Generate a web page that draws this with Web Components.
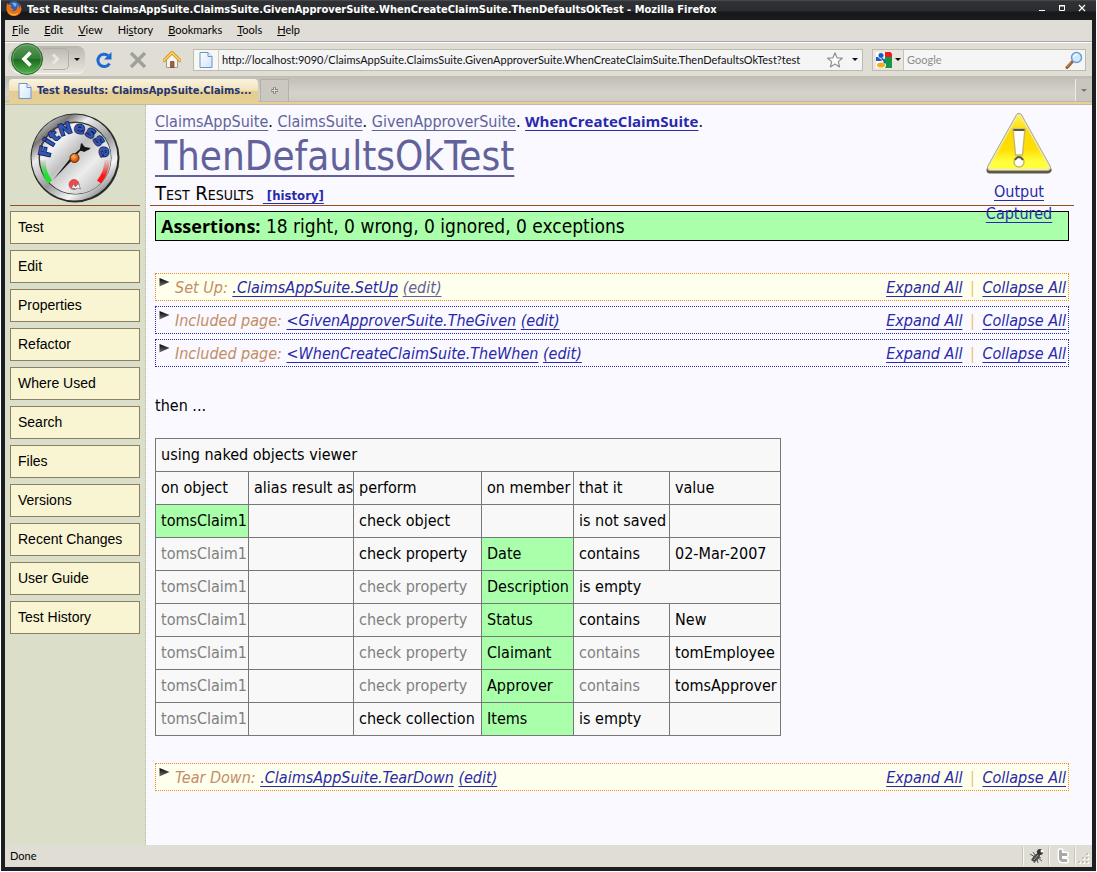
<!DOCTYPE html>
<html lang="en">
<head>
<meta charset="utf-8">
<title>Test Results: ClaimsAppSuite</title>
<style>
  html, body { margin: 0; background: #fff; }
  body { font: 16px/22px "DejaVu Sans Condensed", "DejaVu Sans", sans-serif; color: #000; }
</style>
</head>
<body>
<browser-window>
  <title-bar slot="title">Test Results: ClaimsAppSuite.ClaimsSuite.GivenApproverSuite.WhenCreateClaimSuite.ThenDefaultsOkTest - Mozilla Firefox</title-bar>
  <menu-bar slot="chrome"></menu-bar>
  <nav-bar slot="chrome"></nav-bar>
  <tab-strip slot="chrome">Test Results: ClaimsAppSuite.Claims...</tab-strip>
  <side-nav></side-nav>
  <wiki-page>
    <page-header></page-header>
    <assertion-summary><b slot="label">Assertions:</b> 18 right, 0 wrong, 0 ignored, 0 exceptions</assertion-summary>
    <div class="group">
      <collapsible-section kind="fixture" edited label="Set Up:" target=".ClaimsAppSuite.SetUp"></collapsible-section>
      <collapsible-section label="Included page:" target="&lt;GivenApproverSuite.TheGiven"></collapsible-section>
      <collapsible-section label="Included page:" target="&lt;WhenCreateClaimSuite.TheWhen"></collapsible-section>
    </div>
    <p>then ...</p>
    <result-table></result-table>
    <div class="group">
      <collapsible-section kind="fixture" label="Tear Down:" target=".ClaimsAppSuite.TearDown"></collapsible-section>
    </div>
  </wiki-page>
  <status-bar slot="status">Done</status-bar>
</browser-window>

<script>
const uiFont = '11px/14px Lato, Roboto, "Noto Sans", sans-serif';
const uiBold = 'bold 11px/14px "DejaVu Sans Condensed", "DejaVu Sans", sans-serif';

const base = `<style>
  :host, *, *::before, *::after { box-sizing: border-box; }
  button { font: inherit; color: inherit; border: 0; padding: 0; margin: 0; background: none; display: flex; align-items: center; justify-content: center; }
  a { color: #2929ab; text-decoration: underline; text-underline-offset: 3px; text-decoration-thickness: 1px; text-decoration-skip-ink: none; }
  a.visited { color: #62629a; }
  svg { display: block; flex: none; }
</style>`;

function define(name, view) {
  customElements.define(name, class extends HTMLElement {
    connectedCallback() {
      if (this.shadowRoot) return;
      const t = document.createElement('template');
      t.innerHTML = base + (typeof view === 'function' ? view(this) : view);
      this.attachShadow({ mode: 'open' }).append(t.content.cloneNode(true));
    }
  });
}

const pageIcon = `<svg width="14" height="16" viewBox="0 0 14 16" aria-hidden="true">
  <defs><linearGradient id="pg" x2="1" y2="1"><stop offset="0" stop-color="#fff"/><stop offset="1" stop-color="#cfe4fb"/></linearGradient></defs>
  <path d="M1 .5h8l4 4v11H1z" fill="url(#pg)" stroke="#6a93cf"/><path d="M9 .5v4h4" fill="#e8f2ff" stroke="#6a93cf"/></svg>`;
const caret = `<svg width="6" height="3" viewBox="0 0 6 3" aria-hidden="true"><path d="M0 0h6L3 3z" fill="#111"/></svg>`;

define('browser-window', `<style>
  :host { display: flex; flex-direction: column; min-height: calc(100vh - 1px); margin: 0 1px 1px; background: #1b1f22; }
  .inner { flex: 1; display: flex; flex-direction: column; margin: 0 4px 4px; background: #e0ddd4; }
  .content { flex: 1; display: grid; grid-template-columns: 141px minmax(0, 1fr); background: #f9f9ff; }
</style>
<slot name="title"></slot>
<div class="inner"><slot name="chrome"></slot><div class="content"><slot></slot></div><slot name="status"></slot></div>`);

define('title-bar', `<style>
  :host { display: flex; align-items: center; height: 20px; padding: 0 7px 0 5px; gap: 5px; font: ${uiBold}; color: #fff;
    background: linear-gradient(#45484b 0 1px, #303235 1px, #2a2c2f 11px, #17181a 12px, #1a1b1d); }
  .text { flex: 1; white-space: nowrap; overflow: hidden; padding-bottom: 1px; }
  .buttons { display: flex; gap: 6px; padding-bottom: 4px; }
  button { width: 14px; height: 12px; }
</style>
<svg width="16" height="18" viewBox="0 0 16 18" aria-hidden="true"><circle cx="8" cy="7" r="7" fill="#2c5fae"/><path d="M6 2q3-1 5 1L9 6z" fill="#7fb2e6"/>
<path d="M1 3Q0 6 .5 9 2 15 8 15q7-.5 7.500-7Q15 5 14 3.500q.3 3-.7 4-.3-3-2-4Q12 7 10 9q-2 2-4 .5L8 8Q6 8 4.500 6.500 5 5 6 5 4 3 3 4 1.500 3 1.500 2z" fill="#e9701a"/><path d="M1.500 8q1 5 6.500 5 4 0 5.500-3.500Q12 14.500 8 14.500 2.500 14 1.500 8z" fill="#f9b53a"/></svg>
<span class="text"><slot></slot></span>
<span class="buttons">
  <button aria-label="Minimize"><svg width="8" height="8" viewBox="0 0 8 8"><path d="M1 6h6v1H1z" fill="#fff"/></svg></button>
  <button aria-label="Maximize"><svg width="8" height="8" viewBox="0 0 8 8"><path d="M1.500 2h5v4.500h-5zM1 1.500h6" fill="none" stroke="#fff"/></svg></button>
  <button aria-label="Close"><svg width="8" height="8" viewBox="0 0 8 8"><path d="M1 1l6 6M7 1L1 7" stroke="#fff" stroke-width="1.200"/></svg></button>
</span>`);

define('menu-bar', `<style>
  :host { display: flex; gap: 15px; height: 23px; padding: 2px 7px 0; font: ${uiFont}; color: #000; background: #e0ddd6; border-bottom: 1px solid #fff; box-shadow: inset 0 -1px #a7a6aa; }
  button { height: 15px; display: block; }
</style>
<button><u>F</u>ile</button><button><u>E</u>dit</button><button><u>V</u>iew</button><button>Hi<u>s</u>tory</button><button><u>B</u>ookmarks</button><button><u>T</u>ools</button><button><u>H</u>elp</button>`);

define('nav-bar', `<style>
  :host { display: flex; align-items: center; height: 33px; padding: 0 6px 0 3px; font: ${uiFont}; background: #e0ddd4; }
  .history { display: flex; align-items: center; width: 77px; height: 28px; border-radius: 14px 8px 8px 14px; background: linear-gradient(#b9b6ae, #d6d3cb 60%, #e6e3dc); border-bottom: 1px solid #f8f7f2; }
  .back { width: 32px; height: 34px; margin-left: 3px; }
  .forward { width: 26px; height: 22px; border: 1px solid #b0ada6; border-left: 0; border-radius: 0 5px 5px 0; }
  .more { width: 16px; height: 22px; }
  .tools { display: flex; gap: 16px; margin-left: 10px; align-items: center; }
  .tools button { width: 18px; height: 22px; }
  .field { display: flex; align-items: stretch; height: 22px; border: 1px solid #bdbaae; background: #f5f5f5; }
  .url { flex: 1; margin: 0 9px 0 12px; }
  .site { width: 25px; background: #f7f7f4; border-right: 1px solid #cfccc2; }
  .field input { flex: 1; min-width: 0; width: 0; border: 0; outline: 0; background: none; font: inherit; color: #111; padding: 0 3px; }
  .star { width: 20px; } .drop { width: 20px; }
  .url .star { margin-right: 3px; } .url .drop { width: 14px; }
  .search { width: 214px; }
  .engine { width: 31px; gap: 3px; border-right: 1px solid #c5c2b8; background: #e8e6df; }
  .go { width: 22px; }
  input::placeholder { color: #8c8c8c; opacity: 1; }
</style>
<div class="history">
  <button class="back" aria-label="Back"><svg width="32" height="32" viewBox="0 0 32 32"><defs><linearGradient id="g" y2="1" x2="0"><stop offset="0" stop-color="#5d9a5c"/><stop offset=".48" stop-color="#357f36"/><stop offset=".52" stop-color="#1d6b20"/><stop offset="1" stop-color="#52b84e"/></linearGradient></defs><circle cx="16" cy="16" r="15.500" fill="url(#g)" stroke="#2c6430"/><circle cx="16" cy="16" r="14.300" fill="none" stroke="#8fc08c" stroke-width=".8" opacity=".7"/><path d="M19.500 9.500L13 16l6.500 6.500" fill="none" stroke="#fff" stroke-width="3.600"/></svg></button>
  <button class="forward" aria-label="Forward"><svg width="10" height="12" viewBox="0 0 10 12"><path d="M2 1.500L6.500 6 2 10.500" fill="none" stroke="#e9e7e2" stroke-width="2.800"/></svg></button>
  <button class="more" aria-label="Recent pages">${caret}</button>
</div>
<div class="tools">
  <button aria-label="Reload"><svg width="18" height="18" viewBox="0 0 18 18"><path d="M14.500 12.500A6.200 6.200 0 1 1 13 4.500" fill="none" stroke="#1f68d2" stroke-width="3"/><path d="M16.500 1v7.500H9z" fill="#1f68d2"/></svg></button>
  <button aria-label="Stop"><svg width="18" height="18" viewBox="0 0 18 18"><path d="M2 2l14 14M16 2L2 16" stroke="#a19f9a" stroke-width="3.400"/></svg></button>
  <button aria-label="Home"><svg width="18" height="18" viewBox="0 0 18 18"><path d="M3.500 8v8.500h11V8L9 3z" fill="#f4f4f8" stroke="#9a9aa8"/><path d="M1 9.500L9 1.500l8 8" fill="none" stroke="#c98a1c" stroke-width="3.200" stroke-linecap="round"/><path d="M1 9.500L9 1.500l8 8" fill="none" stroke="#f9cd55" stroke-width="1.800" stroke-linecap="round"/><path d="M7.500 10.500h3.500v6H7.500z" fill="#a8642c" stroke="#70401c" stroke-width=".7"/></svg></button>
</div>
<div class="field url">
  <button class="site" aria-label="Site identity">${pageIcon}</button>
  <input aria-label="Address" value="http://localhost:9090/ClaimsAppSuite.ClaimsSuite.GivenApproverSuite.WhenCreateClaimSuite.ThenDefaultsOkTest?test">
  <button class="star" aria-label="Bookmark this page"><svg width="16" height="16" viewBox="0 0 16 16"><path d="M8 .9l2.100 4.900 5.200.4-4 3.400 1.300 5.300L8 12l-4.600 2.900 1.300-5.300-4-3.400 5.200-.4z" fill="#fdfdfd" stroke="#8f8f8f" stroke-width="1.200" stroke-linejoin="round"/></svg></button>
  <button class="drop" aria-label="Show history">${caret}</button>
</div>
<div class="field search">
  <button class="engine" aria-label="Search engine"><svg width="16" height="16" viewBox="0 0 16 16"><rect width="16" height="16" fill="#fff"/><path d="M9 0h5.500L16 1.500V5H9z" fill="#ee1c1c"/><path d="M9 5h7v11H9q2-3 0-5l-1-2z" fill="#149845"/><path d="M0 5h3l3 4H0z" fill="#1b5cc0"/><circle cx="5" cy="3.500" r="3" fill="#1b5cc0" stroke="#fff" stroke-width=".8"/><path d="M5.500 6.500Q10 9 8 11" fill="none" stroke="#1b5cc0" stroke-width="2"/><ellipse cx="5" cy="13" rx="4" ry="2.600" fill="#f4ae1a"/></svg>${caret}</button>
  <input aria-label="Search" placeholder="Google">
  <button class="go" aria-label="Search now"><svg width="18" height="18" viewBox="0 0 18 18"><path d="M2 16.500l5-5.500" stroke="#9c5a28" stroke-width="3" stroke-linecap="round"/><path d="M1.800 16l4.500-5" stroke="#e09a55" stroke-width="1"/><circle cx="11.500" cy="6.500" r="5" fill="#cfeaff" stroke="#6c9cd4" stroke-width="1.500"/><path d="M8.500 6q1-3 4-2.500" stroke="#fff" stroke-width="1.300" fill="none"/></svg></button>
</div>`);

define('tab-strip', `<style>
  :host { display: flex; height: 29px; padding: 3px 0 0 4px; gap: 2px; font: ${uiBold}; color: #22356e;
    background: linear-gradient(#bfbcb4, #d6d3cb 60%, #cfccc4 25px, #bab7ae 25px 26px, #e7cf96 26px 28px, #bdbab2 28px); }
  .tab { display: flex; align-items: center; justify-content: flex-start; gap: 5px; width: 249px; height: 25px; padding: 0 0 2px 9px; border-radius: 4px 4px 0 0; white-space: nowrap;
    background: linear-gradient(#fbf3df, #f1e3bd 45%, #e5cd91 50%, #e7d096); }
  .new { width: 29px; height: 22px; border: 1px solid #b3b0a8; border-bottom: 0; background: #cbc8c0; }
  .all { width: 17px; height: 22px; margin-left: auto; border-left: 1px solid #eeece6; background: #c9c6be; }
</style>
<button class="tab">${pageIcon}<slot></slot></button>
<button class="new" aria-label="New tab"><svg width="9" height="9" viewBox="0 0 9 9"><path d="M4.500 1v7M1 4.500h7" stroke="#77756f" stroke-width="2.400"/><path d="M4.500 1.500v6M1.500 4.500h6" stroke="#e2e0da"/></svg></button>
<button class="all" aria-label="List all tabs"><svg width="6" height="3" viewBox="0 0 6 3"><path d="M0 0h6L3 3z" fill="#77756f"/></svg></button>`);

define('fitnesse-logo', `<style>:host { display: block; } text { font: bold 16px "DejaVu Sans", sans-serif; }</style>
<svg width="90" height="92" viewBox="0 0 90 92" role="img" aria-label="FitNesse">
  <defs>
    <linearGradient id="rim" x1=".1" y1="0" x2=".9" y2="1"><stop offset="0" stop-color="#fff"/><stop offset=".18" stop-color="#777"/><stop offset=".3" stop-color="#eee"/><stop offset=".55" stop-color="#999"/><stop offset=".75" stop-color="#f6f6f6"/><stop offset="1" stop-color="#555"/></linearGradient>
    <linearGradient id="face" x1="0" y1="0" x2="1" y2="1"><stop offset="0" stop-color="#8c8c8c"/><stop offset=".25" stop-color="#f5f5f5"/><stop offset=".45" stop-color="#c0c0c0"/><stop offset=".65" stop-color="#ededed"/><stop offset="1" stop-color="#a5a5a5"/></linearGradient>
    <linearGradient id="gr" x2="0" y2="1"><stop offset="0" stop-color="#3f9a45" stop-opacity=".1"/><stop offset=".7" stop-color="#19e62a"/></linearGradient>
    <linearGradient id="rd" x2="0" y2="1"><stop offset="0" stop-color="#e05050" stop-opacity=".1"/><stop offset=".7" stop-color="#ff1418"/></linearGradient>
    <radialGradient id="hub" cx=".4" cy=".35"><stop offset="0" stop-color="#ffb45c"/><stop offset="1" stop-color="#d8540a"/></radialGradient>
    <path id="arc" d="M20 46A25 25 0 0 1 70 46L70 52" fill="none"/>
  </defs>
  <circle cx="45" cy="46" r="44.500" fill="#2b2b2b"/><circle cx="44.500" cy="45.500" r="43" fill="url(#rim)"/>
  <circle cx="45" cy="46" r="36.500" fill="#3b3b3b"/><circle cx="45.500" cy="46.500" r="35.500" fill="url(#face)"/>
  <path d="M13 48Q13 60 20 70" fill="none" stroke="url(#gr)" stroke-width="5"/>
  <path d="M77 48Q77 60 69 70" fill="none" stroke="url(#rd)" stroke-width="5"/>
  <text fill="#3455b4" stroke="#101c50" stroke-width="1.500" paint-order="stroke"><textPath href="#arc">FitNesse</textPath></text>
  <path d="M23 68L43 43l7-6 1-6 4 4 6 1-4 2-7 1-6 7z" fill="#171717"/><path d="M50 38l2-7 2 5 6 1-6 3z" fill="#171717"/>
  <circle cx="44.500" cy="46" r="4.500" fill="url(#hub)" stroke="#5a2706"/>
  <circle cx="44" cy="72.500" r="5" fill="#ef4a4a" stroke="#b83030" stroke-width=".6"/><path d="M41 77l2.500-5 2 3 3-3.500 2 5.500-3-1-2 1-2-1z" fill="#fff" stroke="#777" stroke-width=".8"/>
</svg>`);

define('side-nav', () => `<style>
  :host { display: block; padding: 7px 5px; background: #dbdfc9; border-right: 1px dotted #b9bba6; }
  .logo { display: flex; justify-content: center; padding-bottom: 1px; border-bottom: 1px solid #96501c; margin-bottom: 5px; }
  nav { display: flex; flex-direction: column; gap: 6px; }
  a { display: block; height: 33px; padding: 0 7px; border: 1px solid #8a8064; background: #f9f5d3; color: #000; text-decoration: none; font: 14px/31px "Liberation Sans", Arial, sans-serif; }
</style>
<div class="logo"><fitnesse-logo></fitnesse-logo></div>
<nav>${['Test', 'Edit', 'Properties', 'Refactor', 'Where Used', 'Search', 'Files', 'Versions', 'Recent Changes', 'User Guide', 'Test History'].map(t => `<a href="#">${t}</a>`).join('')}</nav>`);

define('wiki-page', `<style>
  :host { display: block; padding: 5px 18px 0 4px; }
  ::slotted(:not(page-header)) { margin-left: 5px !important; margin-right: 5px !important; }
  ::slotted(.group) { display: grid; gap: 5px; }
  ::slotted(p) { margin: 28px 0 21px; }
  ::slotted(assertion-summary) { margin-top: 5px; margin-bottom: 32px; }
  ::slotted(result-table) { margin-bottom: 27px; }
</style><slot></slot>`);

define('page-header', `<style>
  :host { display: block; position: relative; padding: 0 5px; border-bottom: 1px solid #96501c; }
  .crumbs { height: 22px; line-height: 22px; } .crumbs b { font-family: "Open Sans", sans-serif; font-size: 15px; }
  h1 { margin: 0; font-size: 40px; line-height: 49px; font-weight: normal; }
  h1 a { text-decoration-thickness: 2px; text-underline-offset: 5px; }
  h2 { margin: 0; display: flex; align-items: baseline; gap: 9px; height: 24px; font-size: 20px; line-height: 24px; font-weight: normal; font-variant: small-caps; }
  h2 a { font: bold 13px/22px "DejaVu Sans Condensed", sans-serif; }
  .captured { position: absolute; top: 2px; right: 16px; width: 78px; text-align: center; line-height: 22px; }
  .captured svg { margin: 0 auto 7px; }
</style>
<div class="crumbs"><a class="visited" href="#">ClaimsAppSuite</a>. <a class="visited" href="#">ClaimsSuite</a>. <a class="visited" href="#">GivenApproverSuite</a>. <b><a href="#">WhenCreateClaimSuite</a></b>.</div>
<h1><a class="visited" href="#">ThenDefaultsOkTest</a></h1>
<h2>Test Results <a href="#">&nbsp;[history]</a></h2>
<a class="captured" href="#"><svg width="66" height="62" viewBox="0 0 66 62" aria-hidden="true">
  <defs><linearGradient id="y" x2="0" y2="1"><stop offset="0" stop-color="#fff04a"/><stop offset=".3" stop-color="#ffd900"/><stop offset=".65" stop-color="#ffdf05"/><stop offset=".9" stop-color="#ffff3c"/></linearGradient></defs>
  <path d="M33 5L62 57H4z" fill="#5d5a45" stroke="#5d5a45" stroke-width="7" stroke-linejoin="round" transform="translate(0 1)"/>
  <path d="M33 4.500L61.500 55.500H4.500z" fill="#b3af80" stroke="#b3af80" stroke-width="7" stroke-linejoin="round"/>
  <path d="M33 4.500L61.500 55.500H4.500z" fill="#efecc0" stroke="#efecc0" stroke-width="5" stroke-linejoin="round"/>
  <path d="M33 5L61 55H5z" fill="url(#y)" stroke="url(#y)" stroke-width="3" stroke-linejoin="round"/>
  <path d="M27 17h12l-2.500 26h-7z" fill="#fff" stroke="#c9b96a" stroke-width="1.500"/><path d="M27.500 18h11" stroke="#5c5648" stroke-width="2"/>
  <circle cx="33" cy="50" r="5" fill="#fff" stroke="#c9b96a" stroke-width="1.500"/><path d="M29 48q4-6 8 0" stroke="#5c5648" stroke-width="2" fill="none"/>
</svg>Output Captured</a>`);

define('assertion-summary', `<style>
  :host { display: block; height: 30px; padding: 0 5px; border: 1px solid #000; background: #aaffaa; font-size: 19px; line-height: 28px; white-space: nowrap; }
  ::slotted(b) { font-family: "Open Sans", sans-serif; font-size: 18px; }
</style><slot name="label"></slot><slot></slot>`);

define('collapsible-section', el => {
  const target = el.getAttribute('target').replace('<', '&lt;');
  return `<style>
  :host { display: flex; align-items: flex-start; height: 28px; padding: 2px 2px 0 3px; border: 1px dotted #2929ab; color: #c38d66; font-style: italic; line-height: 24px; white-space: nowrap; }
  :host([kind="fixture"]) { border-color: #f08a1c; background: #ffffee; }
  .toggle { width: 11px; height: 9px; margin: 2px 5px 0 0; }
  .all { margin-left: auto; } .all i { color: #efc07c; font-style: normal; padding: 0 3px; }
</style>
<button class="toggle" aria-label="Expand"><svg width="11" height="9" viewBox="0 0 11 9"><defs><linearGradient id="t" x2="0" y2="1"><stop offset="0" stop-color="#000"/><stop offset="1" stop-color="#777"/></linearGradient></defs><path d="M.5 0L10.500 4 .5 8.500z" fill="url(#t)"/></svg></button>
<span>${el.getAttribute('label')} <a href="#">${target}</a> <a href="#"${el.hasAttribute('edited') ? ' class="visited"' : ''}>(edit)</a></span>
<span class="all"><a href="#">Expand All</a> <i>|</i> <a href="#">Collapse All</a></span>`;
});

/* Cell marks: "+" passed, "-" repeated from the row above. */
const rows = [
  ['on object', 'alias result as', 'perform', 'on member', 'that it', 'value'],
  ['+tomsClaim1', '', 'check object', '', 'is not saved', ''],
  ['-tomsClaim1', '', 'check property', '+Date', 'contains', '02-Mar-2007'],
  ['-tomsClaim1', '', '-check property', '+Description', 'is empty'],
  ['-tomsClaim1', '', '-check property', '+Status', 'contains', 'New'],
  ['-tomsClaim1', '', '-check property', '+Claimant', '-contains', 'tomEmployee'],
  ['-tomsClaim1', '', '-check property', '+Approver', '-contains', 'tomsApprover'],
  ['-tomsClaim1', '', 'check collection', '+Items', 'is empty', '']
];
define('result-table', () => `<style>
  :host { display: block; }
  table { border-collapse: collapse; table-layout: fixed; width: 626px; background: #f8f8f8; }
  td { height: 33px; padding: 0 5px; border: 1px solid #777; white-space: nowrap; line-height: 22px; }
  .pass { background: #aaffaa; } .same { color: #808080; }
</style>
<table><colgroup><col style="width:93px"><col style="width:105px"><col style="width:128px"><col style="width:92px"><col style="width:96px"><col></colgroup>
<tbody><tr><td colspan="6">using naked objects viewer</td></tr>
${rows.map(r => `<tr>${r.map((c, i) => {
  const cls = c[0] === '+' ? ' class="pass"' : c[0] === '-' ? ' class="same"' : '';
  const span = r.length === 5 && i === 4 ? ' colspan="2"' : '';
  return `<td${cls}${span}>${c.replace(/^[+-]/, '')}</td>`;
}).join('')}</tr>`).join('')}
</tbody></table>`);

define('status-bar', `<style>
  :host { display: flex; align-items: center; height: 22px; padding-left: 5px; font: ${uiFont}; background: #e0ddd4; }
  .icons { display: flex; margin-left: auto; }
  .icons span { display: flex; align-items: center; justify-content: center; width: 26px; height: 18px; border-left: 1px solid #f8f7f2; box-shadow: -1px 0 #c6c3ba; }
  .icons span:last-child { width: 17px; align-items: flex-end; }
</style><slot></slot>
<div class="icons">
  <span><svg width="16" height="16" viewBox="0 0 16 16" aria-label="Firebug"><path d="M1 6l5 3M2 12l4-2M5 15l2-3M9 15l-1-4M4 4l3 4M8 3l1 3M12 10l-3-1M13 13l-4-3" stroke="#555"/><ellipse cx="7" cy="9.500" rx="2.700" ry="5" transform="rotate(42 7 9.500)" fill="#4a4a4a"/><path d="M5 12l4-5" stroke="#999"/><circle cx="11" cy="4" r="3" fill="#333"/><circle cx="13" cy="3" r="1.500" fill="#fff"/></svg></span>
  <span><svg width="16" height="16" viewBox="0 0 16 16" aria-label="Twitter"><path d="M5.500 3v7q0 2.500 2.500 2.500h3M5.500 6.500h5.500" fill="none" stroke="#fff" stroke-width="6" stroke-linecap="round" stroke-linejoin="round"/><path d="M5.500 3v7q0 2.500 2.500 2.500h3M5.500 6.500h5.500" fill="none" stroke="#aaa9a5" stroke-width="3" stroke-linecap="round"/></svg></span>
  <span><svg width="12" height="12" viewBox="0 0 12 12"><path d="M9 1h2v2H9zM5 5h2v2H5zM9 5h2v2H9zM1 9h2v2H1zM5 9h2v2H5zM9 9h2v2H9z" fill="#fff"/><path d="M8 0h2v2H8zM4 4h2v2H4zM8 4h2v2H8zM0 8h2v2H0zM4 8h2v2H4zM8 8h2v2H8z" fill="#c3c0b6"/></svg></span>
</div>`);
</script>
</body>
</html>
